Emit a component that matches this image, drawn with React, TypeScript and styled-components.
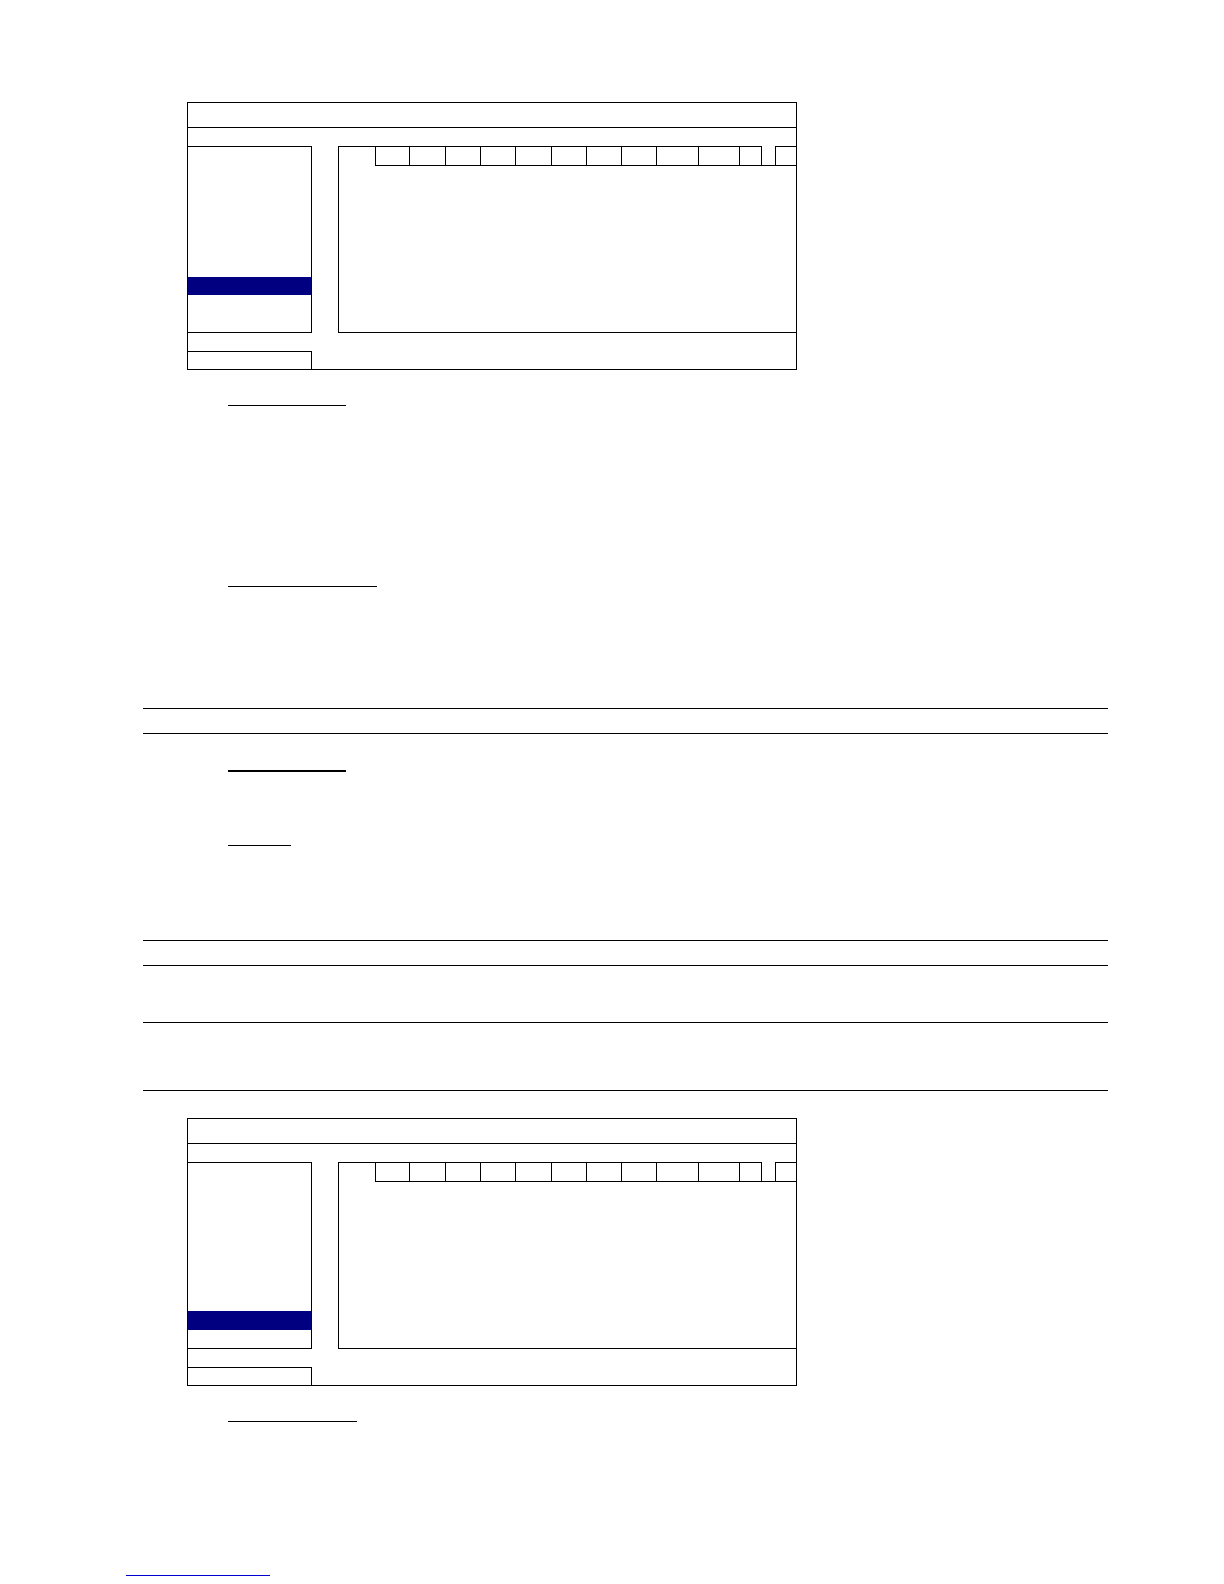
import React from "react";
import styled, { createGlobalStyle } from "styled-components";

const Global = createGlobalStyle`
  html, body { margin: 0; padding: 0; background: #fff; }
  body { font-family: "Liberation Serif", "Times New Roman", serif; color: #000; }
  * { box-sizing: border-box; }
`;

const Page = styled.div`
  width: 1224px;
  min-height: 1584px;
  padding: 102px 0 0 126px;
  display: flex;
  flex-direction: column;
  align-items: flex-start;
  overflow: hidden;
`;

const Screen = styled.div<{ $mt: number }>`
  margin: ${(p) => p.$mt}px 0 0 61px;
  width: 610px;
  height: 268px;
  border: 1px solid #000;
  display: flex;
  flex-direction: column;
`;

const TitleBar = styled.div`
  height: 25px;
  flex: none;
  border-bottom: 1px solid #000;
`;

const Spacer = styled.div<{ $h: number }>`
  height: ${(p) => p.$h}px;
  flex: none;
`;

const MainRow = styled.div`
  height: 187px;
  flex: none;
  display: flex;
`;

const MenuList = styled.div`
  width: 124px;
  flex: none;
  border-top: 1px solid #000;
  border-right: 1px solid #000;
  border-bottom: 1px solid #000;
  display: grid;
  grid-template-rows: repeat(10, 18.5px);
`;

const MenuItem = styled.div<{ $active?: boolean }>`
  background: ${(p) => (p.$active ? "#000080" : "transparent")};
`;

const Content = styled.div`
  margin-left: 26px;
  flex: 1;
  border-left: 1px solid #000;
  border-bottom: 1px solid #000;
  display: flex;
  flex-direction: column;
`;

const TabStrip = styled.div`
  display: flex;
  height: 20px;
`;

const TabLead = styled.div`
  width: 36px;
  border-top: 1px solid #000;
`;

const Tab = styled.div<{ $w: number; $closed?: boolean }>`
  width: ${(p) => p.$w}px;
  flex: none;
  border-top: 1px solid #000;
  border-bottom: 1px solid #000;
  border-left: 1px solid #000;
  border-right: ${(p) => (p.$closed ? "1px solid #000" : "none")};
`;

const TabGap = styled.div<{ $w: number }>`
  width: ${(p) => p.$w}px;
  flex: none;
  border-bottom: 1px solid #000;
`;

const StatusBox = styled.div`
  width: 124px;
  height: 18px;
  flex: none;
  border-top: 1px solid #000;
  border-right: 1px solid #000;
`;

const Heading = styled.div<{ $mt: number; $w: number; $thick?: boolean; $link?: boolean; $ml?: number }>`
  margin-top: ${(p) => p.$mt}px;
  margin-left: ${(p) => (p.$ml ?? 102)}px;
  width: ${(p) => p.$w}px;
  height: ${(p) => 16 + (p.$thick ? 2 : 1)}px;
  border-bottom: ${(p) => (p.$thick ? 2 : 1)}px solid ${(p) => (p.$link ? "#0000cc" : "#000")};
`;

const Table = styled.div<{ $mt: number }>`
  margin: ${(p) => p.$mt}px 0 0 17px;
  width: 965px;
  border-bottom: 1px solid #000;
`;

const TableRow = styled.div<{ $h: number }>`
  height: ${(p) => p.$h}px;
  border-top: 1px solid #000;
`;

const tabWidths = [34, 36, 35, 35, 36, 35, 35, 35, 42, 41];

function DvrScreen({ mt, active }: { mt: number; active: number }) {
  return (
    <Screen $mt={mt}>
      <TitleBar />
      <Spacer $h={18} />
      <MainRow>
        <MenuList>
          {Array.from({ length: 10 }).map((_, i) => (
            <MenuItem key={i} $active={i === active} />
          ))}
        </MenuList>
        <Content>
          <TabStrip>
            <TabLead />
            {tabWidths.map((w, i) => (
              <Tab key={i} $w={w} />
            ))}
            <Tab $w={23} $closed />
            <TabGap $w={13} />
            <Tab $w={21} />
          </TabStrip>
        </Content>
      </MainRow>
      <Spacer $h={18} />
      <StatusBox />
    </Screen>
  );
}

export default function App() {
  return (
    <>
      <Global />
      <Page>
        <DvrScreen mt={0} active={7} />
        <Heading $mt={19} $w={118} />
        <Heading $mt={164} $w={149} />
        <Table $mt={121}>
          <TableRow $h={25} />
        </Table>
        <Heading $mt={20} $w={118} $thick />
        <Heading $mt={57} $w={63} />
        <Table $mt={94}>
          <TableRow $h={25} />
          <TableRow $h={57} />
          <TableRow $h={68} />
        </Table>
        <DvrScreen mt={27} active={8} />
        <Heading $mt={19} $w={129} />
        <Heading $mt={137} $w={144} $ml={0} $link />
      </Page>
    </>
  );
}
